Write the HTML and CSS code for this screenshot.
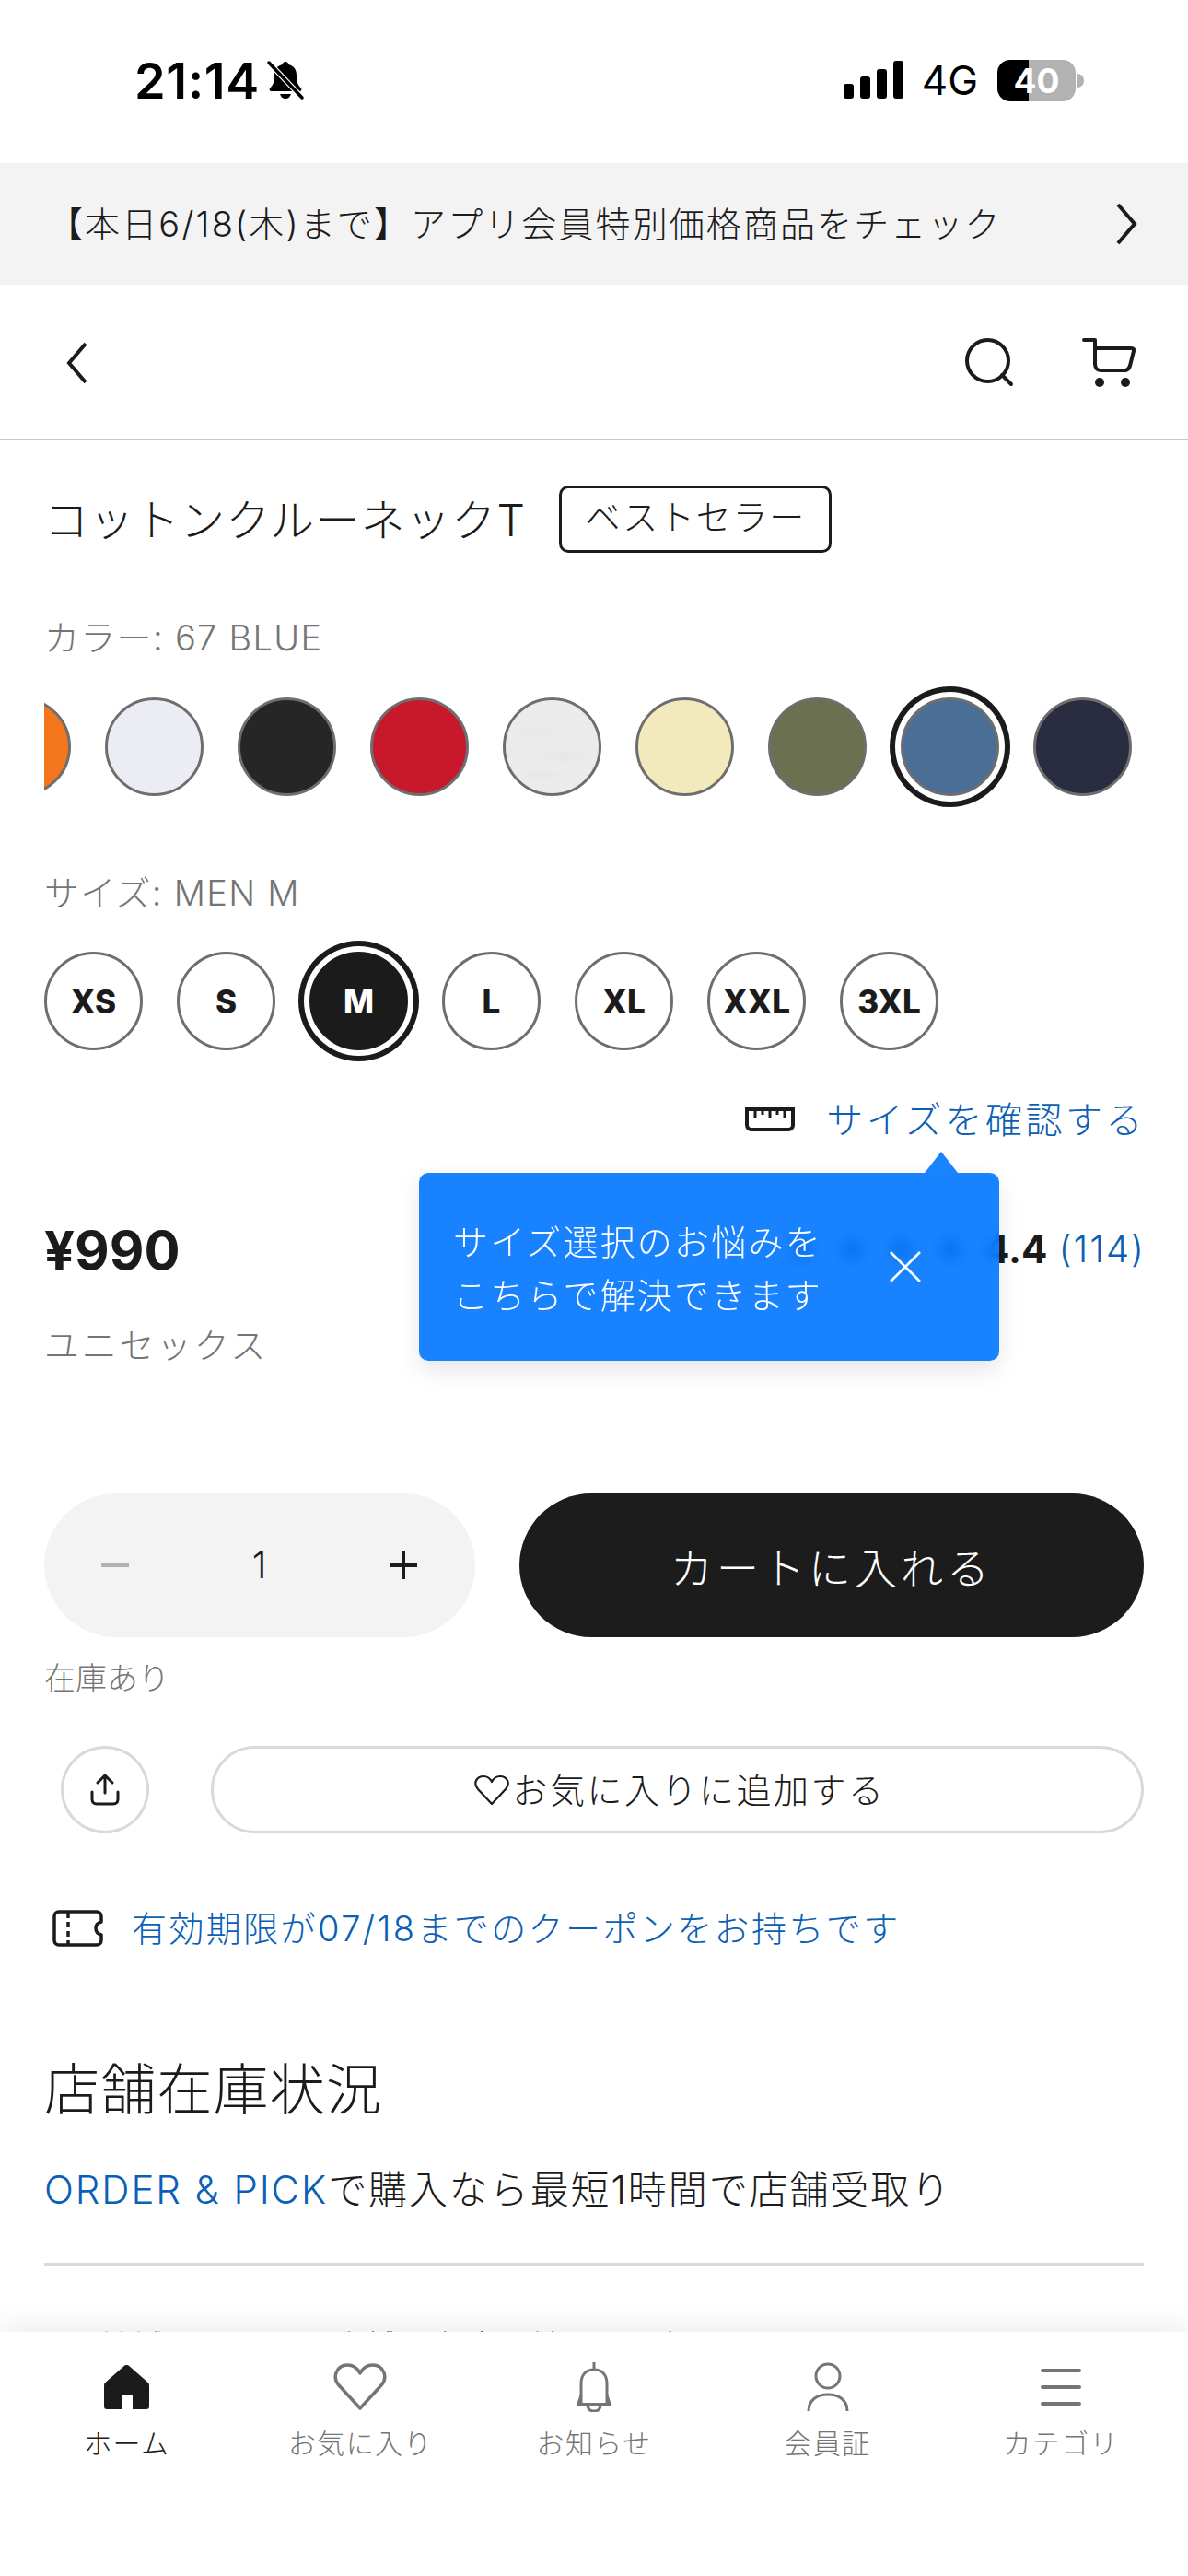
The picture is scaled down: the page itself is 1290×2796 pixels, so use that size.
FILE: index.html
```html
<!DOCTYPE html>
<html lang="ja">

<head>
    <meta charset="UTF-8">
    <title>コットンクルーネックT</title>
    <link rel="stylesheet" href="styles.css">
</head>

<body>
    <div class="page">
        <div class="status">
            <div class="status-left">
                <span class="time">21:14</span>
                <svg class="mute" width="44" height="44" viewBox="0 0 44 44">
                    <path d="M22 2c-2 0-3 1.300-3.300 3C12.500 6.500 10 11 10 17c0 7-1.500 10-5 14-1 1.500 0 3 1.500 3h31c1.500 0 2.500-1.500 1.500-3-3.500-4-5-7-5-14 0-6-2.500-10.500-8.700-12C25 3.300 24 2 22 2z" fill="#000" />
                    <path d="M16 37c.8 3 3 5 6 5s5.200-2 6-5z" fill="#000" />
                    <path d="M4 3l36 38" stroke="#fff" stroke-width="6" />
                    <path d="M4 3l36 38" stroke="#000" stroke-width="3.500" stroke-linecap="round" />
                </svg>
            </div>
            <div class="status-right">
                <svg width="66" height="42" viewBox="0 0 66 42">
                    <rect x="0" y="25" width="11" height="16" rx="3" />
                    <rect x="18" y="17" width="11" height="24" rx="3" />
                    <rect x="36" y="9" width="11" height="32" rx="3" />
                    <rect x="54" y="0" width="11" height="41" rx="3" />
                </svg>
                <span class="net">4G</span>
                <div class="battery"><span>40</span></div>
                <div class="battery-nub"></div>
            </div>
        </div>

        <div class="banner">
            <span class="banner-text">【本日6/18(木)まで】アプリ会員特別価格商品をチェック</span>
            <svg width="26" height="46" viewBox="0 0 26 46"><path d="M4 2l18 21L4 44" class="line" stroke-width="4" /></svg>
        </div>

        <div class="nav">
            <svg width="24" height="46" viewBox="0 0 24 46"><path d="M21 2L3 23l18 21" class="line" stroke-width="4" /></svg>
            <div class="nav-icons">
                <svg width="54" height="54" viewBox="0 0 54 54">
                    <circle cx="24.500" cy="24.500" r="22.500" class="line" stroke-width="4" />
                    <path d="M40 40l10 10" class="line" stroke-width="4" stroke-linecap="round" />
                </svg>
                <svg width="58" height="54" viewBox="0 0 58 54">
                    <path d="M2 2h12v26c0 4 2 7 6 7h26c3 0 5-2 6-5l4-16c.6-2.500-1-3-3-3H14" class="line" stroke-width="4" stroke-linecap="round" stroke-linejoin="round" />
                    <circle cx="19" cy="48" r="5" fill="#1b1b1b" />
                    <circle cx="47" cy="48" r="5" fill="#1b1b1b" />
                </svg>
            </div>
        </div>
        <div class="track"><div class="track-thumb"></div></div>

        <div class="main">
            <div class="title-row">
                <h1>コットンクルーネックT</h1>
                <span class="badge">ベストセラー</span>
            </div>

            <div class="label label-color">カラー: 67 BLUE</div>
            <div class="swatches">
                <div class="swatch first" style="background-color:#f3761c"></div>
                <div class="swatch" style="background-color:#ececf4"></div>
                <div class="swatch" style="background-color:#262626"></div>
                <div class="swatch" style="background-color:#c7192b"></div>
                <div class="swatch heather" style="background-color:#ebebeb"></div>
                <div class="swatch" style="background-color:#f2e9bd"></div>
                <div class="swatch" style="background-color:#6b7051"></div>
                <div class="swatch selected" style="background-color:#4a6e96"></div>
                <div class="swatch" style="background-color:#2a2d42"></div>
            </div>

            <div class="label label-size">サイズ: MEN M</div>
            <div class="sizes">
                <div class="size">XS</div>
                <div class="size">S</div>
                <div class="size selected">M</div>
                <div class="size">L</div>
                <div class="size">XL</div>
                <div class="size">XXL</div>
                <div class="size">3XL</div>
            </div>

            <div class="size-guide">
                <svg width="54" height="26" viewBox="0 0 54 26">
                    <path d="M2 2h50v17c0 3-2 5-5 5H7c-3 0-5-2-5-5z" class="line" stroke="#000" stroke-width="4" />
                    <path d="M11 2v9M19 2v6M27 2v9M35 2v6M43 2v9" class="line" stroke-width="3" />
                </svg>
                <span class="size-guide-text">サイズを確認する</span>
            </div>

            <div class="price-row">
                <span class="price">¥990</span>
                <div class="rating">
                    <span class="stars">★★★★</span>
                    <span class="score">4.4</span>
                    <span class="count">(114)</span>
                </div>
            </div>
            <div class="gender">ユニセックス</div>

            <div class="buy-row">
                <div class="qty">
                    <span class="minus"></span>
                    <span class="num">1</span>
                    <svg width="30" height="30" viewBox="0 0 30 30"><path d="M15 0v30M0 15h30" class="line" stroke-width="4" /></svg>
                </div>
                <div class="cart-btn">カートに入れる</div>
            </div>
            <div class="stock">在庫あり</div>

            <div class="action-row">
                <div class="share">
                    <svg width="32" height="34" viewBox="0 0 32 34">
                        <path d="M16 20V2M8 9l8-8 8 8" class="line" stroke-width="3" stroke-linecap="round" stroke-linejoin="round" />
                        <path d="M2 19v8c0 3 2 5 5 5h18c3 0 5-2 5-5v-8" class="line" stroke-width="3" stroke-linecap="round" />
                    </svg>
                </div>
                <div class="fav-btn">
                    <svg width="38" height="34" viewBox="0 0 38 34"><path d="M19 32L4 16C-2 9 3 2 10 2c4 0 7 2 9 6 2-4 5-6 9-6 7 0 12 7 6 14z" class="line" stroke-width="2.200" stroke-linejoin="round" /></svg>
                    <span class="fav-text">お気に入りに追加する</span>
                </div>
            </div>

            <div class="coupon">
                <svg width="55" height="40" viewBox="0 0 55 40">
                    <path d="M7 2h41c3 0 5 2 5 5v6c-4 1-6 4-6 7s2 6 6 7v6c0 3-2 5-5 5H7c-3 0-5-2-5-5V7c0-3 2-5 5-5z" class="line" stroke="#000" stroke-width="3.500" stroke-linejoin="round" />
                    <path d="M17 3v34" class="line" stroke="#000" stroke-width="3.500" stroke-dasharray="6 4" />
                </svg>
                <span class="coupon-text">有効期限が07/18までのクーポンをお持ちです</span>
            </div>

            <h2>店舗在庫状況</h2>
            <p class="pick"><span class="blue">ORDER &amp; PICK</span>で購入なら最短1時間で店舗受取り</p>
            <hr class="divider">
            <div class="store-row">
                <span class="store-area">地域</span>
                <span>店舗の在庫を地図から探す</span>
            </div>
        </div>

        <div class="tooltip">
            <p>サイズ選択のお悩みを<br>こちらで解決できます</p>
            <svg width="36" height="36" viewBox="0 0 36 36"><path d="M2 2l32 32M34 2L2 34" stroke="#fff" stroke-width="2.500" fill="none" /></svg>
        </div>

        <div class="tabs">
            <div class="tab active">
                <div class="tab-icon">
                    <svg width="49" height="48" viewBox="0 0 49 48"><path d="M21.500 1.300a4 4 0 0 1 6 0L46 17.500a6 6 0 0 1 3 5V45a3 3 0 0 1-3 3H31V32H19v16H3a3 3 0 0 1-3-3V22.500a6 6 0 0 1 3-5z" fill="#1b1b1b" /></svg>
                </div>
                <span>ホーム</span>
            </div>
            <div class="tab">
                <div class="tab-icon">
                    <svg width="58" height="52" viewBox="0 0 58 52"><path d="M29 49L6 24C-2 15 4 2 15 2c6 0 11 3 14 9 3-6 8-9 14-9 11 0 17 13 9 22z" class="gray" stroke-width="3.500" stroke-linejoin="round" /></svg>
                </div>
                <span>お気に入り</span>
            </div>
            <div class="tab">
                <div class="tab-icon">
                    <svg width="44" height="54" viewBox="0 0 44 54">
                        <path d="M22 0v8M8 45V23C8 13 14 8 22 8s14 5 14 15v22" class="gray" stroke-width="3" />
                        <path d="M8 36l-3 9M36 36l3 9M3 45.500h38M15 46c0 5 3 7 7 7s7-2 7-7" class="gray" stroke-width="3" />
                    </svg>
                </div>
                <span>お知らせ</span>
            </div>
            <div class="tab">
                <div class="tab-icon">
                    <svg width="46" height="54" viewBox="0 0 46 54">
                        <circle cx="23" cy="15" r="13" class="gray" stroke-width="3" />
                        <path d="M2 53c0-12 9-18 21-18s21 6 21 18" class="gray" stroke-width="3" />
                    </svg>
                </div>
                <span>会員証</span>
            </div>
            <div class="tab">
                <div class="tab-icon">
                    <svg width="44" height="42" viewBox="0 0 44 42"><path d="M2 3h40M2 21h40M2 39h40" class="gray" stroke-width="4" stroke-linecap="round" /></svg>
                </div>
                <span>カテゴリ</span>
            </div>
        </div>
    </div>
</body>

</html>
```

FILE: styles.css
```css
* {
    box-sizing: border-box;
}

body {
    margin: 0;
    background: #fff;
    color: #1b1b1b;
    font-family: Inter, "Noto Sans CJK JP", sans-serif;
    font-weight: 300;
}

svg {
    display: block;
    flex-shrink: 0;
}

.line {
    fill: none;
    stroke: #1b1b1b;
}

.gray {
    fill: none;
    stroke: #757575;
}

.page {
    position: relative;
    width: 1290px;
    height: 2796px;
    overflow: hidden;
}

/* status bar */
.status {
    display: flex;
    justify-content: space-between;
    height: 177px;
    padding: 64px 113px 0 146px;
    color: #000;
}

.status-left {
    display: flex;
    align-items: center;
    gap: 6px;
    height: 46px;
}

.time {
    font-size: 54px;
    font-weight: 600;
    letter-spacing: 0.700px;
}

.status-right {
    display: flex;
    align-items: center;
    height: 46px;
}

.net {
    margin-left: 19px;
    font-size: 44px;
    font-weight: 400;
}

.battery {
    width: 85px;
    height: 45px;
    margin-left: 21px;
    border-radius: 14px;
    background: linear-gradient(90deg, #000 40%, #b2b2b2 40%);
    color: #fff;
    font-size: 37px;
    font-weight: 700;
    line-height: 45px;
    text-align: center;
}

.battery-nub {
    width: 7px;
    height: 15px;
    margin-left: 2px;
    border-radius: 0 8px 8px 0;
    background: #b2b2b2;
}

/* banner and top nav */
.banner {
    display: flex;
    align-items: center;
    justify-content: space-between;
    height: 132px;
    padding: 0 54px 0 52px;
    background: #f3f3f3;
    font-size: 38px;
    letter-spacing: 2.100px;
}

.banner-text {
    margin-bottom: 5px;
}

.nav {
    display: flex;
    align-items: center;
    justify-content: space-between;
    height: 167px;
    padding: 2px 57px 0 72px;
}

.nav-icons {
    display: flex;
    gap: 73px;
}

.track {
    height: 2px;
    background: #c8c8c8;
}

.track-thumb {
    width: 583px;
    height: 1px;
    margin-left: 357px;
    background: #1b1b1b;
}

/* product */
.main {
    padding: 0 48px;
}

.title-row {
    display: flex;
    align-items: center;
    gap: 36px;
    height: 73px;
    margin-top: 49px;
}

h1 {
    margin: 0 0 5px;
    font-size: 48px;
    font-weight: 300;
    letter-spacing: 1.300px;
}

.badge {
    width: 296px;
    height: 73px;
    border: 3px solid #1b1b1b;
    border-radius: 10px;
    font-size: 38px;
    line-height: 63px;
    letter-spacing: 1.800px;
    text-align: center;
}

.label {
    color: #757575;
    font-size: 38px;
    line-height: 50px;
    letter-spacing: 1.300px;
}

.label-color {
    margin-top: 67px;
}

.label-size {
    margin-top: 68px;
}

.swatches {
    display: flex;
    align-items: center;
    gap: 37px;
    height: 131px;
    margin-top: 28px;
    overflow: hidden;
}

.swatch {
    width: 107px;
    height: 107px;
    flex-shrink: 0;
    border: 3px solid #6e6e6e;
    border-radius: 50%;
}

.swatch.first {
    margin-left: -78px;
}

.swatch.heather {
    background-image:
        radial-gradient(ellipse 30px 8px at 30% 35%, rgba(0, 0, 0, 0.02), transparent),
        radial-gradient(ellipse 34px 9px at 65% 60%, rgba(0, 0, 0, 0.02), transparent),
        radial-gradient(ellipse 26px 7px at 40% 80%, rgba(0, 0, 0, 0.02), transparent);
}

.swatch.selected,
.size.selected {
    box-shadow: 0 0 0 6px #fff, 0 0 0 12px #1b1b1b;
}

.sizes {
    display: flex;
    align-items: center;
    gap: 37px;
    height: 133px;
    margin-top: 26px;
}

.size {
    display: flex;
    align-items: center;
    justify-content: center;
    width: 107px;
    height: 107px;
    border: 3px solid #6e6e6e;
    border-radius: 50%;
    font-size: 35px;
    font-weight: 800;
}

.size.selected {
    border-color: #1b1b1b;
    background: #1b1b1b;
    color: #fff;
}

.size-guide {
    display: flex;
    align-items: center;
    justify-content: flex-end;
    gap: 34px;
    height: 56px;
    margin-top: 34px;
    color: #0b60b5;
    font-size: 40px;
    letter-spacing: 3.500px;
}

.size-guide-text {
    margin: 0 -2px 5px 0;
}

.price-row {
    display: flex;
    align-items: center;
    justify-content: space-between;
    height: 70px;
    margin-top: 80px;
}

.price {
    margin-bottom: 3px;
    font-size: 58px;
    font-weight: 700;
}

.rating {
    display: flex;
    align-items: center;
    gap: 12px;
    padding-bottom: 5px;
}

.stars {
    margin-right: -10px;
    color: #1b1b1b;
    font-size: 38px;
    letter-spacing: 14px;
}

.score {
    font-size: 42px;
    font-weight: 700;
}

.count {
    margin-right: -2px;
    color: #0b60b5;
    font-size: 40px;
    letter-spacing: 2px;
}

.gender {
    margin-top: 42px;
    color: #757575;
    font-size: 38px;
    line-height: 50px;
    letter-spacing: 2.700px;
}

.buy-row {
    display: flex;
    gap: 48px;
    height: 156px;
    margin-top: 136px;
}

.qty {
    display: flex;
    align-items: center;
    justify-content: space-between;
    width: 468px;
    padding: 0 63px 0 62px;
    border-radius: 78px;
    background: #f3f3f3;
}

.minus {
    width: 30px;
    height: 4px;
    background: #b2b2b2;
}

.num {
    margin-bottom: 2px;
    font-size: 40px;
}

.cart-btn {
    flex: 1;
    padding-top: 3px;
    border-radius: 78px;
    background: #1c1c1c;
    color: #fff;
    font-size: 46px;
    line-height: 156px;
    letter-spacing: 4px;
    text-align: center;
}

.stock {
    margin-top: 23px;
    color: #757575;
    font-size: 34px;
    line-height: 44px;
}

.action-row {
    display: flex;
    align-items: center;
    gap: 67px;
    height: 95px;
    margin: 51px 0 0 18px;
}

.share {
    display: flex;
    align-items: center;
    justify-content: center;
    width: 96px;
    height: 95px;
    border: 3px solid #d9d9d9;
    border-radius: 50%;
}

.fav-btn {
    display: flex;
    flex: 1;
    align-items: center;
    justify-content: center;
    gap: 3px;
    height: 95px;
    padding-left: 6px;
    border: 3px solid #d9d9d9;
    border-radius: 48px;
    font-size: 38px;
    letter-spacing: 2.500px;
}

.fav-text {
    margin-bottom: 4px;
}

.coupon {
    display: flex;
    align-items: center;
    gap: 31px;
    height: 50px;
    margin: 78px 0 0 9px;
    color: #0b60b5;
    font-size: 38px;
    letter-spacing: 2.400px;
}

.coupon-text {
    margin-bottom: 5px;
}

h2 {
    margin: 110px 0 0;
    font-size: 60px;
    font-weight: 300;
    line-height: 80px;
    letter-spacing: 1.200px;
}

.pick {
    margin: 41px 0 0;
    font-size: 42px;
    line-height: 56px;
    letter-spacing: 1.900px;
}

.blue {
    color: #0b60b5;
}

.divider {
    height: 3px;
    margin: 51px 0 0;
    border: 0;
    background: #d9d9d9;
}

.store-row {
    display: flex;
    gap: 180px;
    margin: 64px 0 0 60px;
    font-size: 36px;
    line-height: 50px;
}

.store-area {
    color: #757575;
}

/* tooltip over the size guide */
.tooltip {
    position: absolute;
    top: 1273px;
    left: 455px;
    display: flex;
    align-items: center;
    justify-content: space-between;
    width: 630px;
    height: 204px;
    padding: 0 84px 0 37px;
    border-radius: 10px;
    background: rgba(0, 118, 255, 0.9);
    backdrop-filter: blur(8px);
    box-shadow: 0 10px 24px rgba(0, 0, 0, 0.1);
    color: #fff;
    font-size: 38px;
    line-height: 58px;
    letter-spacing: 2.200px;
}

.tooltip::before {
    content: "";
    position: absolute;
    top: -23px;
    left: 549px;
    border-right: 18px solid transparent;
    border-bottom: 23px solid #1a84ff;
    border-left: 18px solid transparent;
}

.tooltip p {
    margin: 4px 0 0;
}

/* bottom tabs */
.tabs {
    position: absolute;
    top: 2531px;
    left: 0;
    display: grid;
    grid-template-columns: repeat(5, 1fr);
    width: 100%;
    height: 265px;
    padding: 30px 11px 0;
    background: #fff;
    box-shadow: 0 -8px 28px rgba(0, 0, 0, 0.07);
}

.tab {
    display: flex;
    flex-direction: column;
    align-items: center;
    color: #757575;
    font-size: 30px;
    line-height: 40px;
    letter-spacing: 1.400px;
}

.tab.active {
    color: #1b1b1b;
}

.tab-icon {
    display: flex;
    align-items: center;
    justify-content: center;
    height: 60px;
    margin-bottom: 11px;
}
```
